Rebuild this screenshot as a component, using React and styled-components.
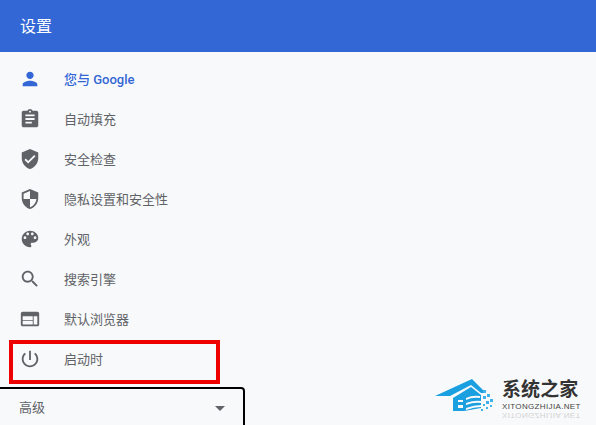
import * as React from 'react';
import styled, { createGlobalStyle } from 'styled-components';

const GlobalStyle = createGlobalStyle`
  html, body {
    margin: 0;
    height: 100%;
    overflow: hidden;
    background: #f8f9fa;
  }
  body {
    font-family: Roboto, "Noto Sans CJK SC", sans-serif;
  }
`;

const Page = styled.div`
  position: relative;
  width: 596px;
  height: 425px;
  overflow: hidden;
  background: #f8f9fa;
`;

const Header = styled.header`
  display: flex;
  align-items: center;
  height: 50px;
  padding: 0 20px 2px;
  background: #3367d6;
  color: #ffffff;
  font-size: 16px;
`;

const Nav = styled.nav`
  display: flex;
  flex-direction: column;
  padding-top: 7px;
  width: 250px;
`;

const Row = styled.a`
  position: relative;
  display: flex;
  align-items: center;
  gap: 23px;
  height: 40px;
  padding-left: 19px;
  font-size: 13px;
  font-weight: ${(props) => (props.active ? 500 : 400)};
  color: ${(props) => (props.active ? '#3367d6' : '#5f6368')};
`;

const RowLabel = styled.span`
  margin-top: -2px;
`;

const Icon = styled.svg`
  flex: none;
  width: 22px;
  height: 22px;
  fill: currentColor;
`;

const Highlight = styled.div`
  position: absolute;
  left: 9px;
  top: 1px;
  width: 203px;
  height: 36px;
  border: 4px solid #ee0000;
`;

const Advanced = styled.div`
  display: flex;
  align-items: center;
  justify-content: space-between;
  box-sizing: border-box;
  width: 249px;
  height: 46px;
  margin-top: 8px;
  margin-left: -4px;
  padding: 0 18px 8px 21px;
  border: 2px solid #000000;
  border-radius: 4px;
  font-size: 13px;
  color: #5f6368;
`;

const Caret = styled.span`
  margin-top: 4px;
  width: 0;
  height: 0;
  border-left: 5px solid transparent;
  border-right: 5px solid transparent;
  border-top: 5px solid #5f6368;
`;

const Watermark = styled.div`
  position: absolute;
  left: 434px;
  top: 376px;
  display: flex;
  gap: 4px;
`;

const Brand = styled.div`
  display: flex;
  flex-direction: column;
  padding-top: 3px;
`;

const BrandName = styled.div`
  font-size: 19px;
  line-height: 22px;
  font-weight: 700;
  letter-spacing: 0.1px;
  color: #333333;
`;

const BrandUrl = styled.div`
  margin-top: 1px;
  font-family: "Liberation Sans", sans-serif;
  font-size: 8px;
  line-height: 9px;
  letter-spacing: 0.35px;
  color: #444444;
`;

const BrandEcho = styled(BrandUrl)`
  margin-top: 0;
  color: #bbbbbb;
  transform: scaleY(-1);
  opacity: 0.6;
`;

const items = [
  {
    label: '您与 Google',
    active: true,
    d: 'M12 12c2.21 0 4-1.79 4-4s-1.79-4-4-4-4 1.79-4 4 1.79 4 4 4zm0 2c-2.67 0-8 1.34-8 4v2h16v-2c0-2.66-5.33-4-8-4z',
  },
  {
    label: '自动填充',
    d: 'M19 3h-4.18C14.4 1.84 13.3 1 12 1c-1.3 0-2.4.84-2.82 2H5c-1.1 0-2 .9-2 2v14c0 1.1.9 2 2 2h14c1.1 0 2-.9 2-2V5c0-1.1-.9-2-2-2zm-7 0c.55 0 1 .45 1 1s-.45 1-1 1-1-.45-1-1 .45-1 1-1zm2 14H7v-2h7v2zm3-4H7v-2h10v2zm0-4H7V7h10v2z',
  },
  {
    label: '安全检查',
    d: 'M12 1L3 5v6c0 5.55 3.84 10.74 9 12 5.16-1.26 9-6.45 9-12V5l-9-4zm-2 16l-4-4 1.41-1.41L10 14.17l6.59-6.59L18 9l-8 8z',
  },
  {
    label: '隐私设置和安全性',
    d: 'M12 1L3 5v6c0 5.55 3.84 10.74 9 12 5.16-1.26 9-6.45 9-12V5l-9-4zm0 10.99h7c-.53 4.12-3.28 7.79-7 8.94V12H5V6.3l7-3.11v8.8z',
  },
  {
    label: '外观',
    d: 'M12 3c-4.97 0-9 4.03-9 9s4.03 9 9 9c.83 0 1.5-.67 1.5-1.5 0-.39-.15-.74-.39-1.01-.23-.26-.38-.61-.38-.99 0-.83.67-1.5 1.5-1.5H16c2.76 0 5-2.24 5-5 0-4.42-4.03-8-9-8zm-5.5 9c-.83 0-1.5-.67-1.5-1.5S5.67 9 6.5 9 8 9.67 8 10.5 7.33 12 6.5 12zm3-4C8.67 8 8 7.33 8 6.5S8.67 5 9.5 5s1.5.67 1.5 1.5S10.33 8 9.5 8zm5 0c-.83 0-1.5-.67-1.5-1.5S13.67 5 14.5 5s1.5.67 1.5 1.5S15.33 8 14.5 8zm3 4c-.83 0-1.5-.67-1.5-1.5S16.67 9 17.5 9s1.5.67 1.5 1.5-.67 1.5-1.5 1.5z',
  },
  {
    label: '搜索引擎',
    d: 'M15.5 14h-.79l-.28-.27C15.41 12.59 16 11.11 16 9.5 16 5.91 13.09 3 9.5 3S3 5.91 3 9.5 5.91 16 9.5 16c1.61 0 3.09-.59 4.23-1.57l.27.28v.79l5 4.99L20.49 19l-4.99-5zm-6 0C7.01 14 5 11.99 5 9.5S7.01 5 9.5 5 14 7.01 14 9.5 11.99 14 9.5 14z',
  },
  {
    label: '默认浏览器',
    d: 'M20 4H4c-1.1 0-1.99.9-1.99 2L2 18c0 1.1.9 2 2 2h16c1.1 0 2-.9 2-2V6c0-1.1-.9-2-2-2zm-5 14H4v-4h11v4zm0-5H4V9h11v4zm5 5h-4V9h4v9z',
  },
  {
    label: '启动时',
    highlighted: true,
    d: 'M13 3h-2v10h2V3zm4.83 2.17l-1.42 1.42C17.99 7.86 19 9.81 19 12c0 3.87-3.13 7-7 7s-7-3.13-7-7c0-2.19 1.01-4.14 2.58-5.42L6.17 5.17C4.23 6.82 3 9.26 3 12c0 4.97 4.03 9 9 9s9-4.03 9-9c0-2.74-1.23-5.18-3.17-6.83z',
  },
];

const HouseLogo = () => (
  <svg width="64" height="40" viewBox="0 0 64 40">
    <path d="M1 20 L38 3 L52 17 L47 17 L37 9 L16 20 Z" fill="#1a9fe0" />
    <path d="M19 22 L37 11 L47 19 L47 32 L30 35 L19 35 Z" fill="#1a9fe0" />
    <path d="M24 24h5v2h-5z M24 29h5v3h-5z" fill="#f8f9fa" />
    <path d="M32 22 Q38 19 46 20 v2 Q38 21 32 24 Z M32 27 Q40 24 47 25 v2 Q40 26 32 29 Z M32 32 Q40 29 47 29 v2 Q40 31 32 34 Z" fill="#f8f9fa" />
    <path d="M49 14h3v3h-3z M53 18h3v3h-3z M49 20h3v3h-3z M56 23h3v3h-3z M52 25h3v3h-3z M49 28h2v2h-2z M56 29h2v2h-2z M52 31h2v2h-2z M47 33h2v2h-2z" fill="#3fb2ea" />
  </svg>
);

export default function App() {
  return (
    <Page>
      <GlobalStyle />
      <Header>设置</Header>
      <Nav>
        {items.map((item) => (
          <Row key={item.label} active={item.active}>
            <Icon viewBox="0 0 24 24">
              <path d={item.d} />
            </Icon>
            <RowLabel>{item.label}</RowLabel>
            {item.highlighted ? <Highlight /> : null}
          </Row>
        ))}
        <Advanced>
          高级
          <Caret />
        </Advanced>
      </Nav>
      <Watermark>
        <HouseLogo />
        <Brand>
          <BrandName>系统之家</BrandName>
          <BrandUrl>XITONGZHIJIA.NET</BrandUrl>
          <BrandEcho>XITONGZHIJIA.NET</BrandEcho>
        </Brand>
      </Watermark>
    </Page>
  );
}
